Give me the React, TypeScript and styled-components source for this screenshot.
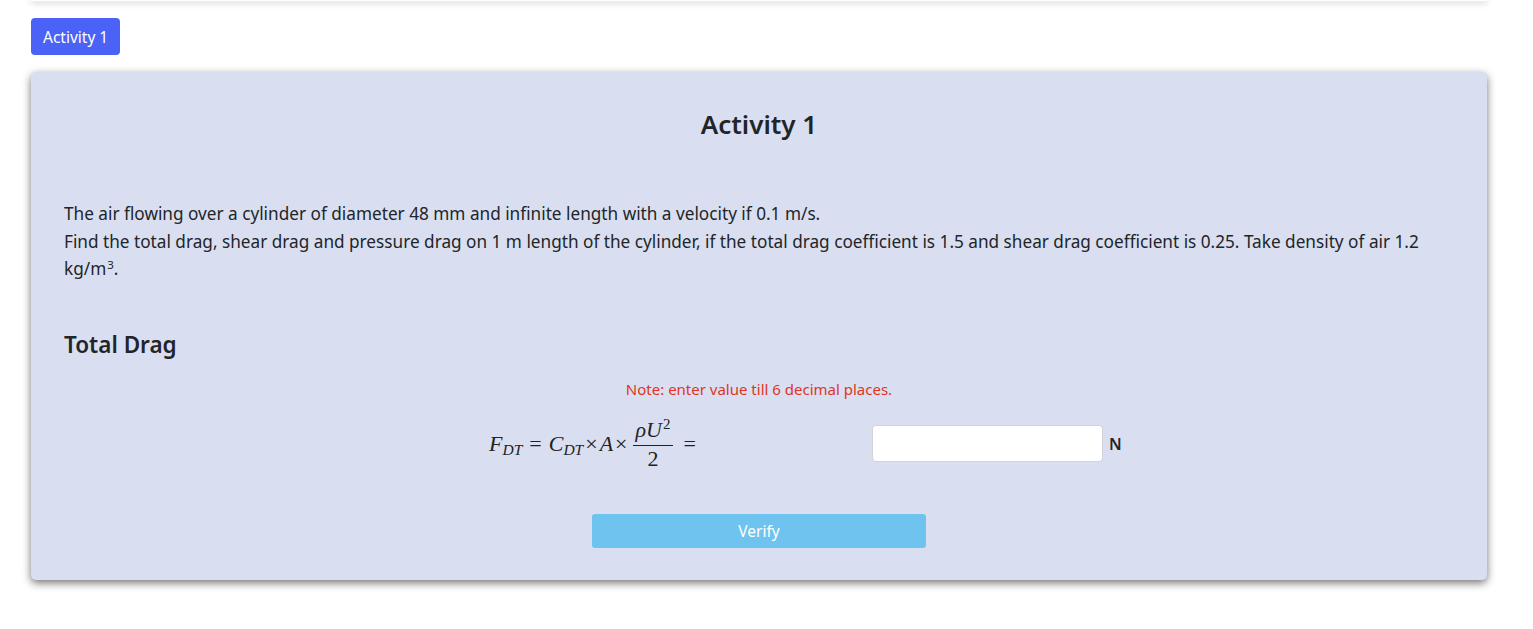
import React from "react";
import styled, { createGlobalStyle } from "styled-components";

const Global = createGlobalStyle`
  html, body { margin: 0; padding: 0; background: #fff; }
  body { font-family: "Noto Sans", "Open Sans", sans-serif; color: #212529; }
  * { box-sizing: border-box; }
`;

const Page = styled.div`
  padding: 0 46px 40px 31px;
`;

const TopBar = styled.div`
  height: 1px;
  background: #fff;
  box-shadow: 0 1px 6px rgba(0, 0, 0, 0.65);
`;

const TabRow = styled.div`
  display: flex;
  padding: 17px 0 17px;
`;

const TabButton = styled.button`
  font-family: "Noto Sans", sans-serif;
  font-size: 15.5px;
  color: #fff;
  background: #4a63f6;
  border: none;
  border-radius: 4px;
  height: 37px;
  padding: 0 12px;
  cursor: pointer;
`;

const Card = styled.section`
  background: #d9dff0;
  border-radius: 5px;
  box-shadow: 0 3px 8px rgba(0, 0, 0, 0.55);
  padding: 30px 33px 32px;
`;

const Title = styled.h2`
  margin: 0;
  text-align: center;
  font-size: 26px;
  font-weight: 600;
  line-height: 44px;
`;

const Problem = styled.p`
  margin: 54px 0 0;
  font-size: 17.2px;
  line-height: 27.5px;
`;

const Sup = styled.span`
  display: inline-block;
  font-size: 11.5px;
  line-height: 12px;
  margin-left: 1px;
  position: relative;
  top: -6px;
`;

const SectionHead = styled.h3`
  margin: 46px 0 0;
  font-size: 22.5px;
  font-weight: 600;
  line-height: 32px;
`;

const Note = styled.div`
  margin-top: 18px;
  text-align: center;
  color: #e0341e;
  font-size: 15px;
  line-height: 20px;
`;

const FormulaRow = styled.div`
  display: flex;
  align-items: center;
  margin-top: 19px;
  padding-left: 425px;
`;

const Formula = styled.div`
  width: 383px;
  display: flex;
  align-items: center;
  font-family: "Liberation Serif", "DejaVu Serif", serif;
  font-size: 22px;
  color: #222;
`;

const Term = styled.span`
  font-style: italic;
  white-space: nowrap;
`;

const Sub = styled.span`
  font-size: 15.5px;
  font-style: italic;
  position: relative;
  top: 4px;
`;

const Op = styled.span<{ $gap?: number }>`
  margin: 0 ${(p) => p.$gap ?? 0}px;
`;

const Frac = styled.span`
  display: inline-flex;
  flex-direction: column;
  align-items: center;
  margin: 0 7px 0 3px;
`;

const Num = styled.span`
  padding: 0 3px 1px;
  border-bottom: 1px solid #222;
  font-style: italic;
  line-height: 23px;
`;

const NumSup = styled.span`
  font-size: 15px;
  font-style: normal;
  position: relative;
  top: -8px;
  margin-left: 1px;
`;

const Den = styled.span`
  line-height: 23px;
  padding-top: 1px;
`;

const Input = styled.input`
  width: 231px;
  height: 37px;
  border: 1px solid #ced4da;
  border-radius: 4px;
  background: #fff;
  font-size: 16px;
`;

const Unit = styled.span`
  margin-left: 6px;
  font-size: 16px;
  font-weight: 600;
`;

const ButtonRow = styled.div`
  display: flex;
  justify-content: center;
  margin-top: 44px;
`;

const Verify = styled.button`
  width: 334px;
  height: 34px;
  border: none;
  border-radius: 3px;
  background: #6ec4ee;
  color: #fff;
  font-family: "Noto Sans", sans-serif;
  font-size: 15.5px;
`;

export default function App() {
  return (
    <>
      <Global />
      <Page>
        <TopBar />
        <TabRow>
          <TabButton>Activity 1</TabButton>
        </TabRow>
        <Card>
          <Title>Activity 1</Title>
          <Problem>
            The air flowing over a cylinder of diameter 48 mm and infinite length with a velocity if 0.1 m/s.
            <br />
            Find the total drag, shear drag and pressure drag on 1 m length of the cylinder, if the total drag
            coefficient is 1.5 and shear drag coefficient is 0.25. Take density of air 1.2 kg/m<Sup>3</Sup>.
          </Problem>
          <SectionHead>Total Drag</SectionHead>
          <Note>Note: enter value till 6 decimal places.</Note>
          <FormulaRow>
            <Formula>
              <Term>
                F<Sub>DT</Sub>
              </Term>
              <Op $gap={7}>=</Op>
              <Term>
                C<Sub>DT</Sub>
              </Term>
              <Op $gap={2}>×</Op>
              <Term>A</Term>
              <Op $gap={2}>×</Op>
              <Frac>
                <Num>
                  ρU<NumSup>2</NumSup>
                </Num>
                <Den>2</Den>
              </Frac>
              <Op $gap={3}>=</Op>
            </Formula>
            <Input type="text" />
            <Unit>N</Unit>
          </FormulaRow>
          <ButtonRow>
            <Verify>Verify</Verify>
          </ButtonRow>
        </Card>
      </Page>
    </>
  );
}
